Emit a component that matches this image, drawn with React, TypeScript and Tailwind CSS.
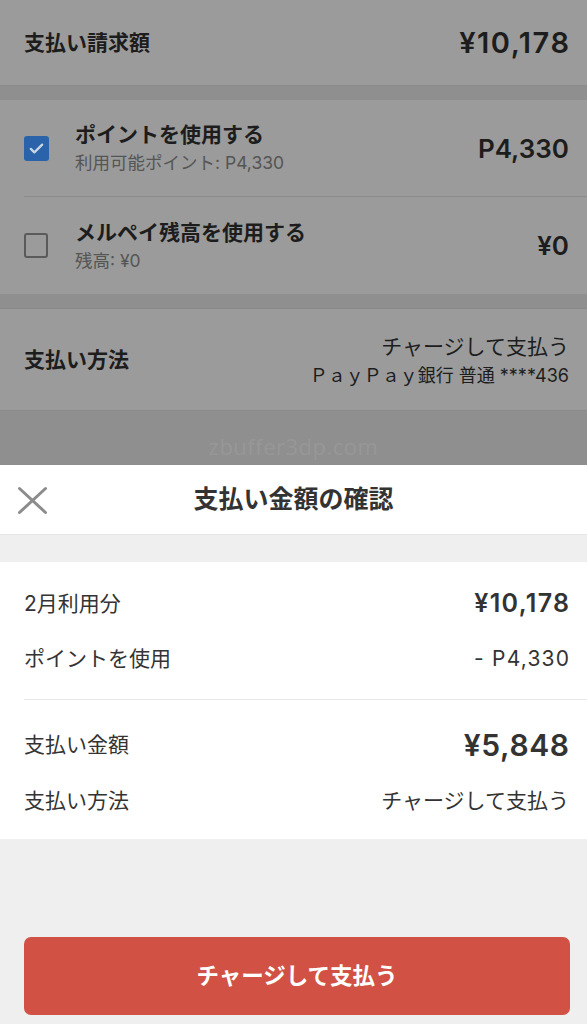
import React from 'react'

const jp = { fontFamily: '"Inter", "Noto Sans CJK JP", sans-serif' }

function Check({ on }: { on: boolean }) {
  if (on) {
    return (
      <div className="w-[25px] h-[25px] rounded-[3px] bg-[#2a63a9] flex items-center justify-center shrink-0">
        <svg width="17" height="17" viewBox="0 0 24 24" fill="none" stroke="#c9d6e6" strokeWidth="3.2" strokeLinecap="round" strokeLinejoin="round">
          <path d="M4 12.5l5 5L20 6.5" />
        </svg>
      </div>
    )
  }
  return <div className="w-[24px] h-[25px] rounded-[3px] border-[2.5px] border-[#5a5a5a] shrink-0" />
}

export default function App() {
  return (
    <div className="w-[587px] h-[1024px] overflow-hidden flex flex-col bg-[#efefef] text-[#1d1d1d]" style={jp}>
      {/* dimmed page behind the sheet */}
      <div className="bg-[#8f8f8f] flex flex-col">
        <div className="h-[86px] bg-[#9b9b9b] flex items-center justify-between pl-6 pr-[18px] border-b border-[#8a8a8a]">
          <span className="text-[21px] font-bold">支払い請求額</span>
          <span className="text-[29px] font-semibold tracking-[1.5px] -mr-[1.5px]">¥10,178</span>
        </div>
        <div className="mt-[14px] bg-[#9b9b9b]">
          <div className="h-[96px] flex items-center pl-6 pr-[18px]">
            <Check on />
            <div className="ml-[26px] flex-1 flex flex-col">
              <span className="text-[21px] font-bold leading-[26px]">ポイントを使用する</span>
              <span className="text-[17.5px] text-[#555] leading-[22px] mt-[4px]">利用可能ポイント: P4,330</span>
            </div>
            <span className="text-[26px] font-semibold">P4,330</span>
          </div>
          <div className="ml-6 border-t border-[#8a8a8a]" />
          <div className="h-[97px] flex items-center pl-6 pr-[18px]">
            <Check on={false} />
            <div className="ml-[27px] flex-1 flex flex-col">
              <span className="text-[21px] font-bold leading-[26px]">メルペイ残高を使用する</span>
              <span className="text-[17.5px] text-[#555] leading-[22px] mt-[4px]">残高: ¥0</span>
            </div>
            <span className="text-[26px] font-semibold">¥0</span>
          </div>
        </div>
        <div className="mt-[14px] h-[103px] bg-[#9b9b9b] flex items-center justify-between pl-6 pr-[18px] border-t border-b border-[#8a8a8a]">
          <span className="text-[21px] font-bold">支払い方法</span>
          <div className="flex flex-col items-end">
            <span className="text-[21px] leading-[28px]">チャージして支払う</span>
            <span className="text-[18px] leading-[22px] mt-[4px]">ＰａｙＰａｙ銀行 普通 ****436</span>
          </div>
        </div>
        <div className="h-[54px] flex items-end justify-center pb-[2px]">
          <span className="text-[22px] text-[#979797] tracking-[0.5px]" style={{ fontFamily: '"Open Sans", sans-serif' }}>zbuffer3dp.com</span>
        </div>
      </div>

      {/* bottom sheet */}
      <div className="flex-1 flex flex-col bg-[#efefef]">
        <div className="h-[70px] bg-white flex items-center relative border-b border-[#e6e6e6]">
          <svg className="absolute left-[17px] top-[21px]" width="31" height="29" viewBox="0 0 31 29" stroke="#8c8c8c" strokeWidth="3" strokeLinecap="round">
            <path d="M2.5 2.5L28.5 26.5M28.5 2.5L2.5 26.5" />
          </svg>
          <span className="w-full text-center text-[25px] font-bold text-[#333]">支払い金額の確認</span>
        </div>
        <div className="mt-[27px] bg-white flex flex-col text-[#333] pt-[14px] pb-[10px]">
          <div className="h-[56px] flex items-center justify-between pl-6 pr-[18px]">
            <span className="text-[21px]">2月利用分</span>
            <span className="text-[25px] font-semibold tracking-[1.3px] -mr-[1.3px]">¥10,178</span>
          </div>
          <div className="h-[54px] flex items-center justify-between pl-6 pr-[18px]">
            <span className="text-[21px]">ポイントを使用</span>
            <span className="text-[21px] tracking-[1.2px] -mr-[1.2px]">-&nbsp;P4,330</span>
          </div>
          <div className="mt-[13px] ml-6 border-t border-[#e8e8e8]" />
          <div className="mt-[17px] h-[56px] flex items-center justify-between pl-6 pr-[18px]">
            <span className="text-[21px]">支払い金額</span>
            <span className="text-[30px] font-semibold tracking-[0.6px] -mr-[0.6px]">¥5,848</span>
          </div>
          <div className="h-[56px] flex items-center justify-between pl-6 pr-[18px]">
            <span className="text-[21px]">支払い方法</span>
            <span className="text-[21px]">チャージして支払う</span>
          </div>
        </div>
        <div className="flex-1 flex flex-col justify-end pl-6 pr-[17px] pb-[9px]">
          <button className="h-[78px] w-full rounded-[7px] bg-[#d15244] text-white text-[22.5px] font-bold">チャージして支払う</button>
        </div>
      </div>
    </div>
  )
}
